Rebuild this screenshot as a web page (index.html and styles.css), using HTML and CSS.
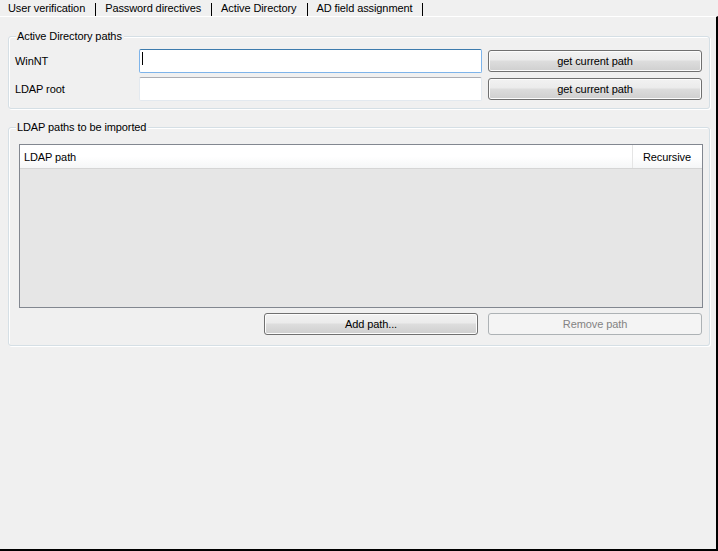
FILE: index.html
```html
<!DOCTYPE html>
<html>
<head>
<meta charset="utf-8">
<link rel="stylesheet" href="styles.css">
</head>
<body>
<div class="tabs">
  <span class="tab">User verification</span><span class="sep"></span>
  <span class="tab">Password directives</span><span class="sep"></span>
  <span class="tab">Active Directory</span><span class="sep"></span>
  <span class="tab">AD field assignment</span><span class="sep"></span>
</div>
<div class="panel">
  <div class="group g1">
    <span class="legend">Active Directory paths</span>
    <div class="row">
      <span class="label">WinNT</span>
      <div class="input focused"><span class="caret"></span></div>
      <button class="btn">get current path</button>
    </div>
    <div class="row">
      <span class="label">LDAP root</span>
      <div class="input"></div>
      <button class="btn">get current path</button>
    </div>
  </div>
  <div class="group g2">
    <span class="legend">LDAP paths to be imported</span>
    <div class="list">
      <div class="list-head">
        <span class="col-path">LDAP path</span>
        <span class="col-rec">Recursive</span>
      </div>
      <div class="list-body"></div>
    </div>
    <div class="actions">
      <button class="btn">Add path...</button>
      <button class="btn disabled">Remove path</button>
    </div>
  </div>
</div>
</body>
</html>
```

FILE: styles.css
```css
html, body {
  margin: 0;
  padding: 0;
}
body {
  width: 718px;
  height: 551px;
  background: #f0f0f0;
  font-family: "Liberation Sans", Arial, sans-serif;
  font-size: 11px;
  letter-spacing: -0.1px;
  color: #000;
  overflow: hidden;
  display: flex;
  flex-direction: column;
}
.tabs {
  height: 16px;
  display: flex;
  align-items: center;
  padding-left: 8px;
  box-sizing: border-box;
}
.tab {
  line-height: 16px;
  white-space: nowrap;
}
.sep {
  display: inline-block;
  width: 1px;
  height: 13px;
  background: #000;
  margin: 2px 9px 0 10px;
}
.panel {
  flex: 1;
  border-top: 1px solid #fff;
  border-right: 2px solid #000;
  border-bottom: 2px solid #000;
  padding: 19px 6px 0 8px;
}
.group {
  position: relative;
  border: 1px solid #d5dfe5;
  border-radius: 3px;
  box-shadow: 1px 1px 0 #fff, inset 1px 1px 0 #fff;
}
.legend {
  position: absolute;
  top: -7px;
  left: 7px;
  padding: 0 2px 0 1px;
  background: #f0f0f0;
  line-height: 13px;
}
.g1 {
  padding: 12px 7px 7px 6px;
}
.row {
  display: flex;
  align-items: center;
  height: 24px;
}
.row + .row {
  margin-top: 4px;
}
.label {
  width: 124px;
  flex: none;
}
.input {
  position: relative;
  width: 343px;
  height: 24px;
  box-sizing: border-box;
  background: #fff;
  border: 1px solid #e3e9ef;
  border-top-color: #abadb3;
  border-radius: 2px;
  flex: none;
}
.input.focused {
  border-color: #7eb4ea;
  border-top-color: #3d7bad;
}
.caret {
  position: absolute;
  left: 2px;
  top: 2px;
  width: 1px;
  height: 13px;
  background: #000;
}
.btn {
  width: 214px;
  height: 22px;
  margin-left: 6px;
  padding: 0;
  font-family: inherit;
  font-size: 11px;
  letter-spacing: -0.1px;
  color: #000;
  border: 1px solid #707070;
  border-radius: 3px;
  background: linear-gradient(#f2f2f2 0%, #ebebeb 45%, #dddddd 50%, #cfcfcf 100%);
  box-shadow: inset 0 0 0 1px #fcfcfc;
  flex: none;
}
.btn.disabled {
  color: #838383;
  border-color: #adb2b5;
  background: #f4f4f4;
  box-shadow: none;
}
.g2 {
  margin-top: 18px;
  padding: 16px 6px 10px 10px;
}
.list {
  height: 164px;
  box-sizing: border-box;
  border: 1px solid #828790;
  background: #e6e6e6;
  display: flex;
  flex-direction: column;
}
.list-head {
  height: 24px;
  box-sizing: border-box;
  display: flex;
  background: linear-gradient(#ffffff 0%, #ffffff 50%, #f5f6f7 100%);
  border-bottom: 1px solid #d5d5d5;
  flex: none;
}
.col-path {
  flex: 1;
  padding: 2px 0 0 4px;
  line-height: 21px;
  border-right: 1px solid #e5e5e5;
}
.col-rec {
  width: 58px;
  padding: 2px 11px 0 0;
  text-align: right;
  line-height: 21px;
}
.list-body {
  flex: 1;
}
.actions {
  display: flex;
  justify-content: flex-end;
  padding-right: 1px;
  margin-top: 5px;
}
.actions .btn {
  margin-left: 10px;
}
```
